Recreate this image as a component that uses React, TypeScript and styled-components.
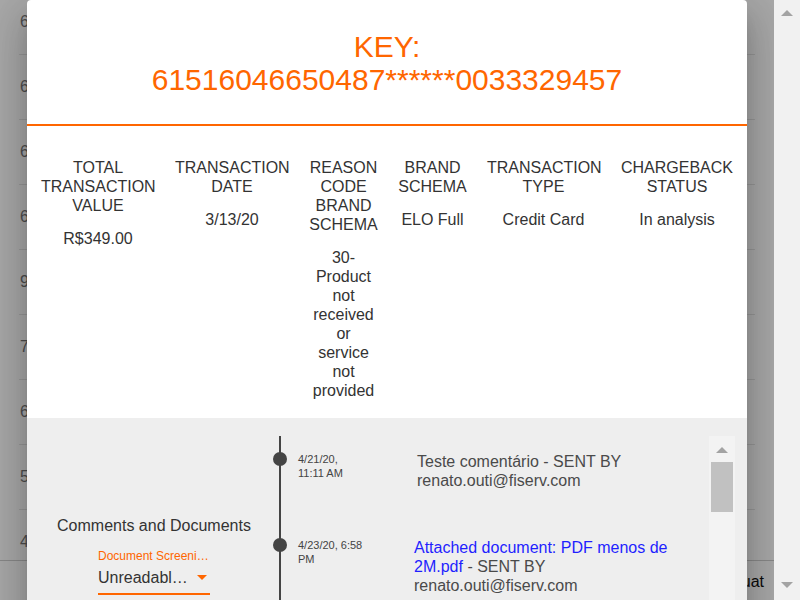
import styled, { createGlobalStyle } from "styled-components";

const ORANGE = "#ff6600";

const GlobalStyle = createGlobalStyle`
  html, body {
    margin: 0;
    padding: 0;
    overflow: hidden;
  }
  body {
    font-family: "Liberation Sans", Arial, sans-serif;
  }
`;

const Screen = styled.div`
  display: flex;
  width: 800px;
  height: 600px;
  overflow: hidden;
  background: #fff;
`;

const Viewport = styled.div`
  position: relative;
  flex: 1;
  display: flex;
  flex-direction: column;
  overflow: hidden;
`;

const KeyList = styled.div`
  flex: 1;
  overflow: hidden;
  padding: 0 19px;
`;

const KeyListInner = styled.div`
  margin-top: -10px;
`;

const KeyRow = styled.div`
  height: 65px;
  box-sizing: border-box;
  border-bottom: 1px solid #e6e6e6;
  display: flex;
  align-items: center;
  padding-left: 1px;
  font-size: 16px;
  color: #777;
  white-space: nowrap;
`;

const Footer = styled.div`
  height: 40px;
  box-sizing: border-box;
  border-top: 1px solid #cfcfcf;
  display: flex;
  align-items: center;
  justify-content: flex-end;
  padding: 3px 10px 0 0;
  font-size: 16px;
  color: #111;
`;

const Backdrop = styled.div`
  position: absolute;
  inset: 0;
  background: rgba(0, 0, 0, 0.34);
  display: flex;
  justify-content: center;
  align-items: flex-start;
`;

const Dialog = styled.div`
  flex-shrink: 0;
  width: 720px;
  background: #fff;
  border-radius: 4px;
  overflow: hidden;
  box-shadow: 0px 11px 15px -7px rgba(0, 0, 0, 0.2),
    0px 24px 38px 3px rgba(0, 0, 0, 0.14),
    0px 9px 46px 8px rgba(0, 0, 0, 0.12);
`;

const Header = styled.div`
  padding: 30px 24px 28px;
  border-bottom: 2px solid ${ORANGE};
  text-align: center;
  color: ${ORANGE};
  font-size: 30px;
  line-height: 33px;
`;

const Details = styled.div`
  display: grid;
  grid-template-columns: 134px 134px 89px 89px 133px 134px;
  align-items: start;
  padding: 32px 4px 18px;
`;

const Field = styled.div`
  padding: 0 10px;
  text-align: center;
  color: #333;
  font-size: 16px;
  line-height: 19px;
`;

const FieldLabel = styled.div`
  margin-bottom: 14px;
`;

const FieldValue = styled.div``;

const Panel = styled.div`
  display: flex;
  background: #eeeeee;
  padding: 18px 12px 0 0;
  min-height: 400px;
`;

const Aside = styled.div`
  width: 238px;
  padding: 80px 0 0 8px;
  display: flex;
  flex-direction: column;
  align-items: center;
`;

const AsideTitle = styled.div`
  font-size: 16px;
  line-height: 19px;
  color: #333;
  white-space: nowrap;
`;

const SelectField = styled.div`
  width: 112px;
  margin-top: 14px;
`;

const SelectLabel = styled.div`
  font-size: 12px;
  line-height: 14px;
  color: ${ORANGE};
  white-space: nowrap;
  overflow: hidden;
  text-overflow: ellipsis;
`;

const SelectControl = styled.div`
  display: flex;
  align-items: center;
  margin-top: 5px;
  padding-bottom: 6px;
  border-bottom: 2px solid ${ORANGE};
`;

const SelectValue = styled.div`
  width: 94px;
  font-size: 16px;
  line-height: 19px;
  color: #333;
  white-space: nowrap;
  overflow: hidden;
  text-overflow: ellipsis;
`;

const Caret = styled.span`
  margin-left: 5px;
  width: 0;
  height: 0;
  border-left: 5px solid transparent;
  border-right: 5px solid transparent;
  border-top: 5px solid ${ORANGE};
`;

const TimelineArea = styled.div`
  flex: 1;
  display: flex;
`;

const Timeline = styled.div`
  flex: 1;
  display: flex;
  flex-direction: column;
`;

const TimelineItem = styled.div`
  display: flex;
`;

const Rail = styled.div`
  flex-shrink: 0;
  width: 14px;
  padding-top: 16px;
  background: linear-gradient(#444, #444) no-repeat center top / 2px 100%;
`;

const Dot = styled.div`
  width: 14px;
  height: 14px;
  border-radius: 50%;
  background: #444;
`;

const When = styled.div`
  flex-shrink: 0;
  width: 68px;
  margin-left: 11px;
  padding-top: 16px;
  font-size: 11px;
  line-height: 14px;
  color: #444;
`;

const Message = styled.div<{ $indent?: number }>`
  flex: 1;
  margin-left: ${(p) => 48 + (p.$indent || 0)}px;
  padding: 16px 20px 32px 0;
  font-size: 16px;
  line-height: 19px;
  color: #4a4a4a;
`;

const DocLink = styled.span`
  color: #1f1fff;
`;

const ScrollTrack = styled.div<{ $bg?: string }>`
  flex-shrink: 0;
  width: 26px;
  background: ${(p) => p.$bg || "#f3f3f3"};
  display: flex;
  flex-direction: column;
  align-items: center;
`;

const PageTrack = styled(ScrollTrack)`
  justify-content: space-between;
  padding: 10px 0 12px;
  box-sizing: border-box;
  height: 600px;
`;

const ArrowUp = styled.span<{ $top?: number }>`
  margin-top: ${(p) => p.$top || 0}px;
  width: 0;
  height: 0;
  border-left: 6px solid transparent;
  border-right: 6px solid transparent;
  border-bottom: 6px solid #a3a3a3;
`;

const ArrowDown = styled.span`
  width: 0;
  height: 0;
  border-left: 6px solid transparent;
  border-right: 6px solid transparent;
  border-top: 6px solid #a3a3a3;
`;

const Thumb = styled.div`
  margin-top: 9px;
  width: 22px;
  height: 50px;
  background: #c1c1c1;
`;

const keys = [
  "61516046650487******0033329457",
  "62380011223344******0012984410",
  "63990174452201******0045511872",
  "65007723310984******0098812003",
  "90211455012237******0077410955",
  "70932184550021******0031124789",
  "60443312980077******0064420913",
  "52768801934421******0020019876",
  "41128870551103******0087764412",
];

const fields = [
  { label: "TOTAL TRANSACTION VALUE", value: "R$349.00" },
  { label: "TRANSACTION DATE", value: "3/13/20" },
  {
    label: "REASON CODE BRAND SCHEMA",
    value: "30-Product not received or service not provided",
  },
  { label: "BRAND SCHEMA", value: "ELO Full" },
  { label: "TRANSACTION TYPE", value: "Credit Card" },
  { label: "CHARGEBACK STATUS", value: "In analysis" },
];

export default function App() {
  return (
    <Screen>
      <GlobalStyle />
      <Viewport>
        <KeyList>
          <KeyListInner>
            {keys.map((k) => (
              <KeyRow key={k}>{k}</KeyRow>
            ))}
          </KeyListInner>
        </KeyList>
        <Footer>Evaluat</Footer>

        <Backdrop>
          <Dialog>
            <Header>
              KEY:
              <br />
              61516046650487******0033329457
            </Header>

            <Details>
              {fields.map((f) => (
                <Field key={f.label}>
                  <FieldLabel>{f.label}</FieldLabel>
                  <FieldValue>{f.value}</FieldValue>
                </Field>
              ))}
            </Details>

            <Panel>
              <Aside>
                <AsideTitle>Comments and Documents</AsideTitle>
                <SelectField>
                  <SelectLabel>Document Screening Result</SelectLabel>
                  <SelectControl>
                    <SelectValue>Unreadable document</SelectValue>
                    <Caret />
                  </SelectControl>
                </SelectField>
              </Aside>

              <TimelineArea>
                <Timeline>
                  <TimelineItem>
                    <Rail>
                      <Dot />
                    </Rail>
                    <When>4/21/20, 11:11 AM</When>
                    <Message $indent={3}>
                      Teste comentário - SENT BY renato.outi@fiserv.com
                    </Message>
                  </TimelineItem>
                  <TimelineItem>
                    <Rail>
                      <Dot />
                    </Rail>
                    <When>4/23/20, 6:58 PM</When>
                    <Message>
                      <DocLink>Attached document: PDF menos de 2M.pdf</DocLink>{" "}
                      - SENT BY renato.outi@fiserv.com
                    </Message>
                  </TimelineItem>
                  <TimelineItem>
                    <Rail />
                  </TimelineItem>
                </Timeline>
                <ScrollTrack>
                  <ArrowUp $top={11} />
                  <Thumb />
                </ScrollTrack>
              </TimelineArea>
            </Panel>
          </Dialog>
        </Backdrop>
      </Viewport>

      <PageTrack $bg="#f1f1f1">
        <ArrowUp />
        <ArrowDown />
      </PageTrack>
    </Screen>
  );
}
